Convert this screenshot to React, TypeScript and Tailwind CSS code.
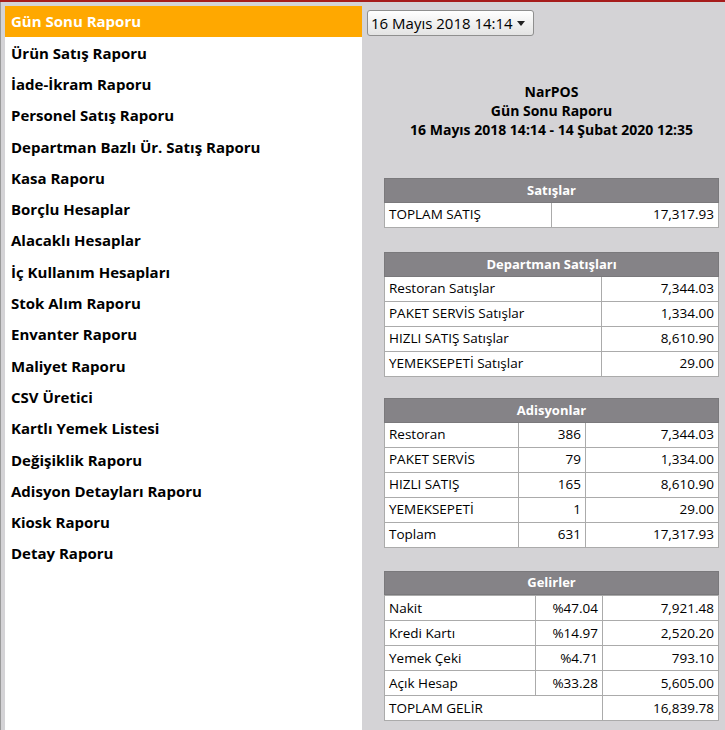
import { useState } from "react";

// Sol menüdeki rapor listesi
const reports = [
  "Gün Sonu Raporu",
  "Ürün Satış Raporu",
  "İade-İkram Raporu",
  "Personel Satış Raporu",
  "Departman Bazlı Ür. Satış Raporu",
  "Kasa Raporu",
  "Borçlu Hesaplar",
  "Alacaklı Hesaplar",
  "İç Kullanım Hesapları",
  "Stok Alım Raporu",
  "Envanter Raporu",
  "Maliyet Raporu",
  "CSV Üretici",
  "Kartlı Yemek Listesi",
  "Değişiklik Raporu",
  "Adisyon Detayları Raporu",
  "Kiosk Raporu",
  "Detay Raporu",
];

const departments = [
  ["Restoran Satışlar", "7,344.03"],
  ["PAKET SERVİS Satışlar", "1,334.00"],
  ["HIZLI SATIŞ Satışlar", "8,610.90"],
  ["YEMEKSEPETİ Satışlar", "29.00"],
];

const checks = [
  ["Restoran", "386", "7,344.03"],
  ["PAKET SERVİS", "79", "1,334.00"],
  ["HIZLI SATIŞ", "165", "8,610.90"],
  ["YEMEKSEPETİ", "1", "29.00"],
  ["Toplam", "631", "17,317.93"],
];

const incomes = [
  ["Nakit", "%47.04", "7,921.48"],
  ["Kredi Kartı", "%14.97", "2,520.20"],
  ["Yemek Çeki", "%4.71", "793.10"],
  ["Açık Hesap", "%33.28", "5,605.00"],
];

const cell = "h-[25px] p-0 px-[4px] border border-[#ababab] leading-none whitespace-nowrap";
// grid hücreleri (Gelirler tablosu)
const gcell = "h-[25px] px-[4px] flex items-center border-t border-[#ababab] whitespace-nowrap";

function Header({ title, span }: { title: string; span: number }) {
  return (
    <thead>
      <tr>
        <th
          colSpan={span}
          className="h-[24px] p-0 bg-[#858387] text-white font-bold text-[13px] border border-[#7a797c]"
        >
          {title}
        </th>
      </tr>
    </thead>
  );
}

export default function App() {
  const [active, setActive] = useState(0);

  return (
    <div
      className="w-[725px] h-[730px] overflow-hidden bg-[#d4d3d6] border-t-2 border-[#a61c1c] flex text-black"
      style={{ fontFamily: '"Open Sans", "DejaVu Sans", sans-serif' }}
    >
      {/* Menü */}
      <div className="w-[362px] pl-[4px] pt-[4px] border-l border-[#9a9a9a] shrink-0">
        <div className="bg-white h-full">
          {reports.map((r, i) => (
            <div
              key={r}
              onClick={() => setActive(i)}
              className={
                "h-[31.3px] flex items-center pl-[6px] text-[15px] font-bold cursor-pointer " +
                (i === active ? "bg-[#ffa800] text-white" : "text-black")
              }
            >
              {r}
            </div>
          ))}
        </div>
      </div>

      {/* Rapor alanı */}
      <div className="flex-1 flex flex-col pr-[6px]">
        <div className="pl-[5px] pt-[8px]">
          <button className="h-[26px] w-[167px] flex items-center justify-between pl-[3px] pr-[8px] rounded-[3px] border border-[#8f8f8f] bg-gradient-to-b from-white to-[#e3e3e3] text-[15px] whitespace-nowrap">
            <span>16 Mayıs 2018 14:14</span>
            <svg width="8" height="5" viewBox="0 0 8 5">
              <path d="M0 0h8L4 5z" fill="#222" />
            </svg>
          </button>
        </div>

        <div className="mt-[46px] ml-[22px] flex flex-col items-center text-[14px] font-bold leading-[19px]">
          <div>NarPOS</div>
          <div>Gün Sonu Raporu</div>
          <div>16 Mayıs 2018 14:14 - 14 Şubat 2020 12:35</div>
        </div>

        <div className="ml-[22px] mt-[39px] flex flex-col text-[13.5px]">
          <table className="w-full table-fixed border-collapse bg-white">
            <colgroup>
              <col className="w-[167px]" />
              <col />
            </colgroup>
            <Header title="Satışlar" span={2} />
            <tbody>
              <tr>
                <td className={cell}>TOPLAM SATIŞ</td>
                <td className={cell + " text-right"}>17,317.93</td>
              </tr>
            </tbody>
          </table>

          <table className="w-full table-fixed border-collapse bg-white mt-[24px]">
            <colgroup>
              <col className="w-[217px]" />
              <col />
            </colgroup>
            <Header title="Departman Satışları" span={2} />
            <tbody>
              {departments.map(([n, v]) => (
                <tr key={n}>
                  <td className={cell}>{n}</td>
                  <td className={cell + " text-right"}>{v}</td>
                </tr>
              ))}
            </tbody>
          </table>

          <table className="w-full table-fixed border-collapse bg-white mt-[21px]">
            <colgroup>
              <col className="w-[134px]" />
              <col className="w-[67px]" />
              <col />
            </colgroup>
            <Header title="Adisyonlar" span={3} />
            <tbody>
              {checks.map(([n, c, v]) => (
                <tr key={n}>
                  <td className={cell}>{n}</td>
                  <td className={cell + " text-right"}>{c}</td>
                  <td className={cell + " text-right"}>{v}</td>
                </tr>
              ))}
            </tbody>
          </table>

          {/* Gelirler */}
          <div className="mt-[23px] grid grid-cols-[150px_67px_1fr] bg-white border-x border-b border-[#ababab]">
            <div className="col-span-3 h-[24px] flex items-center justify-center bg-[#858387] text-white font-bold text-[13px] -mx-px border border-[#7a797c]">
              Gelirler
            </div>
            {incomes.map(([n, p, v]) => (
              <div key={n} className="contents">
                <div className={gcell}>{n}</div>
                <div className={gcell + " justify-end border-l"}>{p}</div>
                <div className={gcell + " justify-end border-l"}>{v}</div>
              </div>
            ))}
            <div className={gcell + " col-span-2"}>TOPLAM GELİR</div>
            <div className={gcell + " justify-end border-l"}>16,839.78</div>
          </div>
        </div>
      </div>
    </div>
  );
}
